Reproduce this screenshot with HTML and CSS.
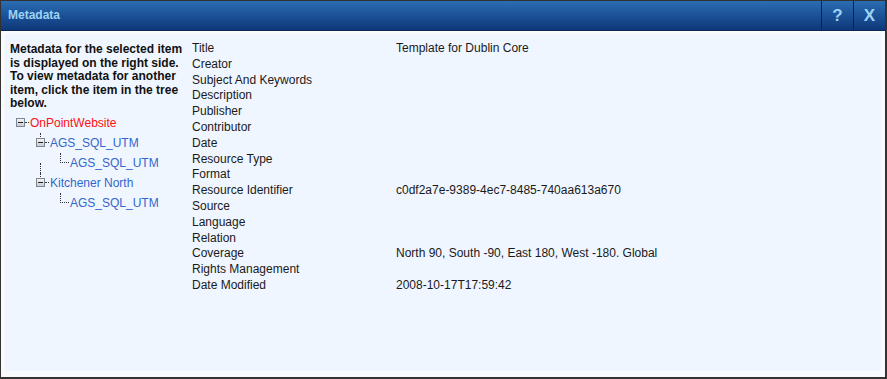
FILE: index.html
```html
<!DOCTYPE html>
<html lang="en">
<head>
  <meta charset="UTF-8" />
  <title>Metadata</title>
  <link rel="stylesheet" href="styles.css">
</head>
<body>
  <div class="window">
    <div class="titlebar">
      <span class="title">Metadata</span>
      <button class="tb-btn">?</button>
      <button class="tb-btn">X</button>
    </div>

    <div class="content">
      <div class="panel">
        <div class="side">
          <p class="hint">Metadata for the selected item is displayed on the right side. To view metadata for another item, click the item in the tree below.</p>

          <div class="tree">
            <div class="node l0"><span class="toggle"></span><span class="stem"></span><a class="selected">OnPointWebsite</a></div>
            <div class="node l1"><span class="toggle"></span><span class="stem"></span><a>AGS_SQL_UTM</a></div>
            <div class="node l2 cont"><span class="stem leaf"></span><a>AGS_SQL_UTM</a></div>
            <div class="node l1"><span class="toggle"></span><span class="stem"></span><a>Kitchener North</a></div>
            <div class="node l2"><span class="stem leaf"></span><a>AGS_SQL_UTM</a></div>
          </div>
        </div>

        <table class="meta">
          <tr><td class="label">Title</td><td>Template for Dublin Core</td></tr>
          <tr><td class="label">Creator</td><td></td></tr>
          <tr><td class="label">Subject And Keywords</td><td></td></tr>
          <tr><td class="label">Description</td><td></td></tr>
          <tr><td class="label">Publisher</td><td></td></tr>
          <tr><td class="label">Contributor</td><td></td></tr>
          <tr><td class="label">Date</td><td></td></tr>
          <tr><td class="label">Resource Type</td><td></td></tr>
          <tr><td class="label">Format</td><td></td></tr>
          <tr><td class="label">Resource Identifier</td><td>c0df2a7e-9389-4ec7-8485-740aa613a670</td></tr>
          <tr><td class="label">Source</td><td></td></tr>
          <tr><td class="label">Language</td><td></td></tr>
          <tr><td class="label">Relation</td><td></td></tr>
          <tr><td class="label">Coverage</td><td>North 90, South -90, East 180, West -180. Global</td></tr>
          <tr><td class="label">Rights Management</td><td></td></tr>
          <tr><td class="label">Date Modified</td><td>2008-10-17T17:59:42</td></tr>
        </table>
      </div>
    </div>
  </div>
</body>
</html>
```

FILE: styles.css
```css
* {
  box-sizing: border-box;
}
html, body {
  margin: 0;
  padding: 0;
}
body {
  font-family: "Liberation Sans", Arial, sans-serif;
  font-size: 12px;
  color: #1a1a1a;
  background: #fff;
}
.window {
  width: 887px;
  height: 379px;
  display: flex;
  flex-direction: column;
  border: 1px solid #333;
  border-right-width: 2px;
  border-bottom-width: 2px;
  background: #f9fafb;
}
.titlebar {
  height: 30px;
  display: flex;
  align-items: stretch;
  background: linear-gradient(#2b6db3, #1a4f94 55%, #0e3878);
  border-bottom: 1px solid #0a2756;
}
.title {
  flex: 1;
  padding-left: 7px;
  line-height: 29px;
  font-weight: bold;
  font-size: 12px;
  color: #9dd3f5;
}
.tb-btn {
  width: 32px;
  border: none;
  border-left: 1px solid #0a2550;
  background: transparent;
  color: #9dd3f5;
  font-family: "Liberation Sans", Arial, sans-serif;
  font-weight: bold;
  font-size: 17px;
  padding: 0;
  cursor: pointer;
}
.content {
  flex: 1;
  padding: 3px 4px 6px 4px;
  display: flex;
}
.panel {
  flex: 1;
  background: #eff6ff;
  display: flex;
  align-items: flex-start;
  padding: 9px 0 0 5px;
}
.side {
  width: 182px;
  flex-shrink: 0;
}
.hint {
  margin: 0;
  width: 178px;
  font-weight: bold;
  line-height: 13.5px;
  color: #111;
}
.tree {
  margin-top: 2px;
}
.node {
  position: relative;
  height: 20px;
  display: flex;
  align-items: center;
  color: #3366cc;
}
.node a {
  cursor: pointer;
}
.node a.selected {
  color: #ff1010;
}
.l0 { padding-left: 6px; }
.l1 { padding-left: 26px; }
.l2 { padding-left: 50px; }
.toggle {
  position: relative;
  width: 9px;
  height: 9px;
  border: 1px solid #7d8794;
  background: linear-gradient(#f4f4f4, #c9ccd0);
  flex-shrink: 0;
}
.toggle::after {
  content: "";
  position: absolute;
  left: 1px;
  top: 3px;
  width: 5px;
  height: 1px;
  background: #222;
}
.stem {
  width: 4px;
  margin-right: 1px;
  border-top: 1px dotted #333;
  flex-shrink: 0;
}
.stem.leaf {
  width: 9px;
  margin-right: 1px;
}
.l1::before {
  content: "";
  position: absolute;
  left: 30px;
  top: 0;
  height: 6px;
  border-left: 1px dotted #333;
}
.l2::before {
  content: "";
  position: absolute;
  left: 50px;
  top: 0;
  height: 10px;
  border-left: 1px dotted #333;
}
.l2.cont::after {
  content: "";
  position: absolute;
  left: 30px;
  top: 10px;
  height: 10px;
  border-left: 1px dotted #333;
}
.meta {
  border-collapse: collapse;
  margin-top: -2px;
}
.meta td {
  padding: 0;
  height: 15.8px;
  line-height: 15.8px;
  vertical-align: top;
  white-space: nowrap;
  color: #1a1a1a;
}
.meta td.label {
  width: 204px;
}
```
